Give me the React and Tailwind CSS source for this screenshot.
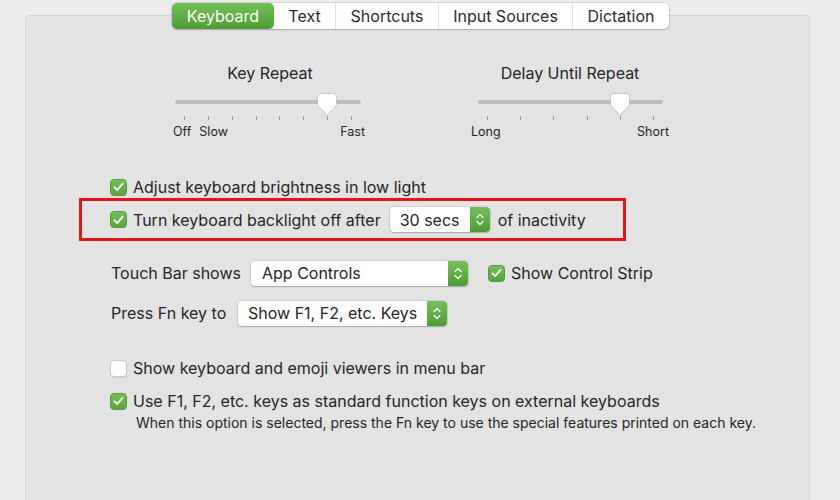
import React from "react";

const font = { fontFamily: "Inter, 'Noto Sans', sans-serif" };

function Check({ checked = true }) {
  if (!checked) {
    return (
      <span className="w-[17px] h-[17px] rounded-[4px] bg-white border border-[#c9c9c9] shadow-[0_1px_1px_rgba(0,0,0,0.08)] shrink-0" />
    );
  }
  return (
    <span className="w-[17px] h-[17px] rounded-[4px] bg-gradient-to-b from-[#74bf55] to-[#5aa63d] border border-[#55993a] flex items-center justify-center shrink-0">
      <svg width="11" height="10" viewBox="0 0 11 10">
        <path d="M1.5 5.3 L4.3 8 L9.5 1.8" fill="none" stroke="white" strokeWidth="1.8" strokeLinecap="round" strokeLinejoin="round" />
      </svg>
    </span>
  );
}

function Stepper() {
  return (
    <span className="w-[20px] self-stretch rounded-r-[4px] bg-gradient-to-b from-[#76c25a] to-[#4d9c32] flex items-center justify-center">
      <svg width="8" height="13" viewBox="0 0 8 13">
        <path d="M1 4.5 L4 1.5 L7 4.5" fill="none" stroke="white" strokeWidth="1.4" strokeLinecap="round" strokeLinejoin="round" />
        <path d="M1 8.5 L4 11.5 L7 8.5" fill="none" stroke="white" strokeWidth="1.4" strokeLinecap="round" strokeLinejoin="round" />
      </svg>
    </span>
  );
}

function Popup({ label, w, pl }) {
  return (
    <div
      className="h-[25px] flex items-stretch bg-white rounded-[4px] shadow-[0_0_0_0.5px_rgba(0,0,0,0.15),0_1px_1.5px_rgba(0,0,0,0.2)]"
      style={{ width: w }}
    >
      <span className="flex-1 flex items-center text-[16px] text-[#262626]" style={{ paddingLeft: pl }}>
        {label}
      </span>
      <Stepper />
    </div>
  );
}

function Thumb() {
  return (
    <svg width="20" height="23" viewBox="0 0 20 23" className="absolute -top-[5px]">
      <path d="M3.5 0.5 H16.5 Q19.5 0.5 19.5 3.5 V12.5 L10 22 L0.5 12.5 V3.5 Q0.5 0.5 3.5 0.5 Z" fill="white" stroke="#bdbdbd" strokeWidth="0.8" />
    </svg>
  );
}

function Slider({ title, trackMl, trackW, ticks, thumbLeft, labels }) {
  return (
    <div className="w-[200px] flex flex-col">
      <div className="h-[20px] leading-[20px] text-center text-[16px] text-[#262626]">{title}</div>
      <div className="mt-[15px] h-[8px] relative flex items-center" style={{ marginLeft: trackMl, width: trackW }}>
        <div className="w-full h-[4px] rounded-full bg-[#bcbcbc]" />
        <div className="absolute" style={{ left: thumbLeft, top: 0 }}>
          <Thumb />
        </div>
      </div>
      <div className="mt-[10px] h-[4px] flex justify-between px-[9px]" style={{ marginLeft: trackMl, width: trackW }}>
        {Array.from({ length: ticks }).map((_, i) => (
          <span key={i} className="w-[1px] h-[4px] bg-[#9a9a9a]" />
        ))}
      </div>
      <div className="mt-[4px] h-[16px] flex items-center text-[12.5px] text-[#262626]">{labels}</div>
    </div>
  );
}

export default function App() {
  return (
    <div className="w-[840px] h-[500px] bg-[#ececec] overflow-hidden pt-[15px] pl-[25px]" style={font}>
      <div className="w-[785px] h-[520px] bg-[#e3e3e3] border border-[#d3d3d3] rounded-[5px] flex flex-col">
        {/* Tabs */}
        <div className="-mt-[13px] ml-[146px] flex h-[26px] w-[497px] bg-white rounded-[5px] shadow-[0_0_0_0.5px_rgba(0,0,0,0.18),0_1px_1.5px_rgba(0,0,0,0.18)] text-[16px] text-[#2b2b2b]">
          <div className="w-[102px] flex items-center justify-center rounded-[5px] bg-gradient-to-b from-[#72c056] to-[#4e9c34] text-white">Keyboard</div>
          <div className="w-[61px] flex items-center justify-center">Text</div>
          <div className="w-[103px] flex items-center justify-center border-l border-[#e0e0e0]">Shortcuts</div>
          <div className="w-[134px] flex items-center justify-center border-l border-[#e0e0e0]">Input Sources</div>
          <div className="w-[97px] flex items-center justify-center border-l border-[#e0e0e0]">Dictation</div>
        </div>

        {/* Sliders */}
        <div className="mt-[34px] ml-[144px] flex gap-[100px]">
          <Slider
            title="Key Repeat"
            trackMl={5}
            trackW={186}
            ticks={8}
            thumbLeft={142}
            labels={
              <>
                <span className="ml-[3px]">Off</span>
                <span className="ml-[8px]">Slow</span>
                <span className="ml-auto mr-[5px]">Fast</span>
              </>
            }
          />
          <Slider
            title="Delay Until Repeat"
            trackMl={8}
            trackW={185}
            ticks={6}
            thumbLeft={132}
            labels={
              <>
                <span className="ml-[1px]">Long</span>
                <span className="ml-auto mr-[1px]">Short</span>
              </>
            }
          />
        </div>

        <div className="text-[16px] text-[#262626] flex flex-col">
          <div className="mt-[37px] ml-[84px] h-[20px] flex items-center gap-[6px]">
            <Check />
            <span>Adjust keyboard brightness in low light</span>
          </div>

          <div className="mt-[1px] ml-[53px] w-[547px] h-[43px] border-[3px] border-[#e3141b] flex items-center pl-[28px]">
            <Check />
            <span className="ml-[6px]">Turn keyboard backlight off after</span>
            <span className="ml-[9px]">
              <Popup label="30 secs" w={100} pl={10} />
            </span>
            <span className="ml-[8px]">of inactivity</span>
          </div>

          <div className="mt-[19px] ml-[85px] h-[26px] flex items-center">
            <span className="w-[140px]">Touch Bar shows</span>
            <Popup label="App Controls" w={217} pl={11} />
            <span className="ml-[20px]">
              <Check />
            </span>
            <span className="ml-[6px]">Show Control Strip</span>
          </div>

          <div className="mt-[14px] ml-[85px] h-[26px] flex items-center">
            <span className="w-[127px]">Press Fn key to</span>
            <Popup label="Show F1, F2, etc. Keys" w={209} pl={10} />
          </div>

          <div className="mt-[32px] ml-[84px] h-[20px] flex items-center gap-[6px]">
            <Check checked={false} />
            <span>Show keyboard and emoji viewers in menu bar</span>
          </div>

          <div className="mt-[13px] ml-[84px] h-[20px] flex items-center gap-[6px]">
            <Check />
            <span>Use F1, F2, etc. keys as standard function keys on external keyboards</span>
          </div>

          <div className="mt-[2px] ml-[110px] h-[18px] flex items-center text-[14px]">
            When this option is selected, press the Fn key to use the special features printed on each key.
          </div>
        </div>
      </div>
    </div>
  );
}
